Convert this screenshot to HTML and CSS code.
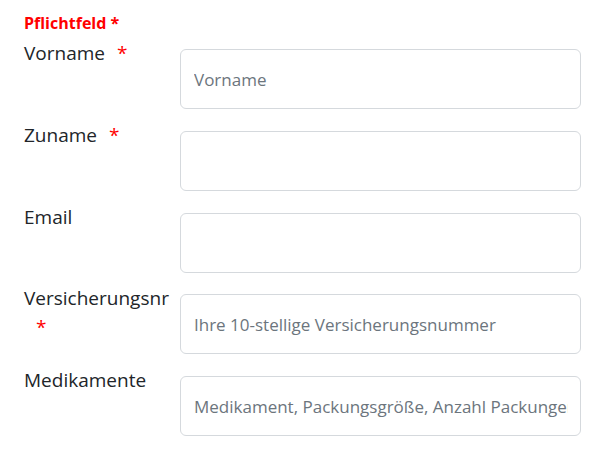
FILE: index.html
```html
<!DOCTYPE html>
<html lang="de">
<head>
<meta charset="utf-8">
<link rel="stylesheet" href="styles.css">
</head>
<body>
<form class="form">
  <div class="legend">Pflichtfeld *</div>
  <div class="row">
    <label class="label" for="vorname">Vorname<span class="req">*</span></label>
    <input class="input" id="vorname" type="text" placeholder="Vorname">
  </div>
  <div class="row">
    <label class="label" for="zuname">Zuname<span class="req">*</span></label>
    <input class="input" id="zuname" type="text">
  </div>
  <div class="row">
    <label class="label" for="email">Email</label>
    <input class="input" id="email" type="email">
  </div>
  <div class="row">
    <label class="label" for="vnr">Versicherungsnr<span class="req">*</span></label>
    <input class="input" id="vnr" type="text" placeholder="Ihre 10-stellige Versicherungsnummer">
  </div>
  <div class="row">
    <label class="label" for="med">Medikamente</label>
    <input class="input" id="med" type="text" placeholder="Medikament, Packungsgröße, Anzahl Packungen">
  </div>
</form>
</body>
</html>
```

FILE: styles.css
```css
html, body {
  margin: 0;
  padding: 0;
  background: #ffffff;
}
body {
  font-family: "Open Sans", "Liberation Sans", sans-serif;
  color: #212529;
}
.form {
  display: flex;
  flex-direction: column;
  padding: 12px 21px 0 24px;
}
.legend {
  color: #ff0000;
  font-weight: 700;
  font-size: 16px;
  line-height: 22px;
  margin-bottom: 5px;
}
.row {
  display: flex;
  align-items: flex-start;
  margin-bottom: 11.75px;
}
.label {
  width: 156px;
  flex: none;
  font-size: 19px;
  line-height: 29px;
  padding-right: 4px;
  box-sizing: border-box;
}
.req {
  display: inline-block;
  color: #ff0000;
  margin-left: 12px;
}
.input {
  flex: 1;
  min-width: 0;
  height: 60px;
  margin-top: 10px;
  box-sizing: border-box;
  border: 1px solid #d5d9dd;
  border-radius: 6px;
  padding: 0 12px 0 13px;
  font-family: "Open Sans", "Liberation Sans", sans-serif;
  font-size: 17px;
  color: #212529;
  background: #fff;
  outline: none;
}
.input::placeholder {
  color: #6c757d;
  opacity: 1;
}
```
